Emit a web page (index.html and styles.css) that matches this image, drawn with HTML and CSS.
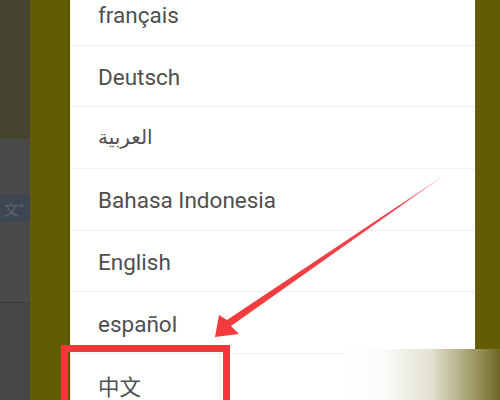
FILE: index.html
```html
<!DOCTYPE html>
<html lang="zh">
  <head>
    <meta charset="UTF-8" />
    <meta name="viewport" content="width=device-width, initial-scale=1.0" />
    <title>Language</title>
    <link rel="stylesheet" href="styles.css">
  </head>
  <body>
    <div class="screen">
      <div class="side">
        <div class="side-top"></div>
        <div class="side-gap"></div>
        <div class="side-tag">文”</div>
        <div class="side-mid"></div>
        <div class="side-bottom"></div>
      </div>
      <div class="shade"></div>
      <div class="dialog">
        <ul class="lang-list">
          <li>français</li>
          <li>Deutsch</li>
          <li class="rtl">العربية</li>
          <li>Bahasa Indonesia</li>
          <li>English</li>
          <li>español</li>
          <li class="cjk">中文</li>
        </ul>
      </div>
      <div class="shade shade-right"></div>

      <!-- annotations drawn over the screenshot -->
      <div class="mark-box"></div>
      <div class="fade-corner"></div>
      <svg class="arrow" width="500" height="400" viewBox="0 0 500 400">
        <defs>
          <linearGradient id="tail" x1="446" y1="174" x2="215" y2="337" gradientUnits="userSpaceOnUse">
            <stop offset="0" stop-color="#f7b0b8" />
            <stop offset="0.2" stop-color="#ee4450" />
            <stop offset="1" stop-color="#f33a3a" />
          </linearGradient>
        </defs>
        <polygon points="446,174 231,326 239,334 215,337 219,315 227,320" fill="url(#tail)" />
      </svg>
    </div>
  </body>
</html>
```

FILE: styles.css
```css
body {
  margin: 0;
  font-family: Roboto, "Noto Sans CJK SC", sans-serif;
  background-color: #4a4a4a;
}

.screen {
  position: relative;
  display: flex;
  width: 500px;
  height: 400px;
  overflow: hidden;
}

.side {
  width: 30px;
  display: flex;
  flex-direction: column;
  background-color: #4a4a4a;
}

.side-top {
  height: 139px;
  background-color: #46442f;
}

.side-gap {
  height: 56px;
}

.side-tag {
  height: 27px;
  display: flex;
  align-items: center;
  justify-content: flex-end;
  padding-right: 6px;
  white-space: nowrap;
  background-color: #3e4653;
  color: #5e646c;
  font-size: 15px;
}

.side-mid {
  height: 80px;
  border-bottom: 1px solid #3b3b3b;
}

.side-bottom {
  flex: 1;
  background-color: #474747;
}

.shade {
  width: 40px;
  background-color: #645c02;
  border-right: 3px solid #5e5603;
  box-sizing: border-box;
}

.shade-right {
  width: 25px;
  border-right: none;
  border-left: 1px solid #6a6312;
}

.dialog {
  width: 405px;
  background-color: #ffffff;
  border-left: 1px solid #f3f1dc;
  box-sizing: border-box;
}

.lang-list {
  list-style: none;
  margin: -16px 0 0;
  padding: 0;
}

.lang-list li {
  height: 61.7px;
  box-sizing: border-box;
  display: flex;
  align-items: center;
  padding: 2px 0 0 27px;
  border-bottom: 1px solid #f0f0f0;
  color: #4f4f4f;
  font-size: 22.5px;
}

.lang-list .rtl {
  padding-top: 0;
  padding-bottom: 3px;
  font-family: "Noto Sans", "DejaVu Sans", sans-serif;
  font-size: 20px;
}

.lang-list .cjk {
  font-family: "Noto Sans CJK SC", sans-serif;
  font-size: 21.5px;
}

.mark-box {
  position: absolute;
  left: 61px;
  top: 345px;
  width: 169px;
  height: 70px;
  border: 7px solid #f2373b;
  box-sizing: border-box;
}

.fade-corner {
  position: absolute;
  left: 345px;
  top: 349px;
  width: 155px;
  height: 51px;
  background: linear-gradient(to right, #ffffff 0%, #fbfbf9 25%, #e4e2d2 55%, #a7a273 80%, #6f6726 100%);
}

.arrow {
  position: absolute;
  left: 0;
  top: 0;
}
```
